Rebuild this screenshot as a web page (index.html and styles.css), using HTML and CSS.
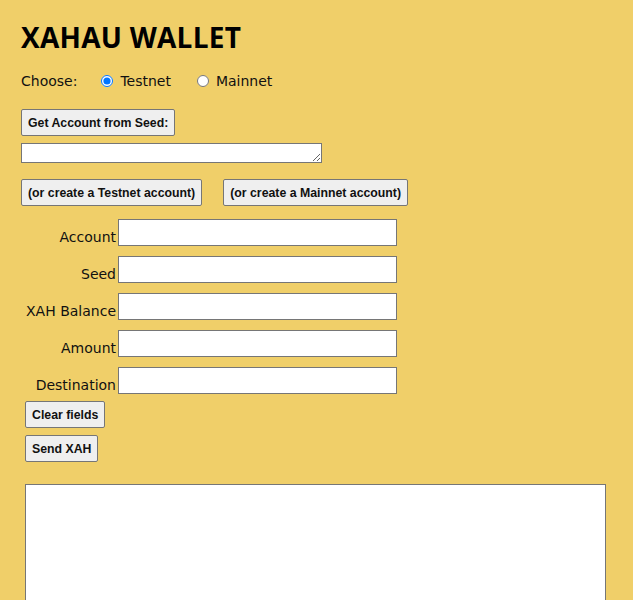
FILE: index.html
```html
<!DOCTYPE html>
<html>
<head>
<meta charset="utf-8">
<link rel="stylesheet" href="styles.css">
</head>
<body>
<div class="page">
  <h1 class="title">XAHAU WALLET</h1>
  <div class="choose">
    <span class="choose-label">Choose:</span>
    <label class="radio"><input type="radio" name="net" checked> Testnet</label>
    <label class="radio"><input type="radio" name="net"> Mainnet</label>
  </div>
  <div class="seed-block">
    <button class="btn">Get Account from Seed:</button>
    <textarea class="seed-area"></textarea>
  </div>
  <div class="create-row">
    <button class="btn">(or create a Testnet account)</button>
    <button class="btn">(or create a Mainnet account)</button>
  </div>
  <div class="fields">
    <label class="field-label">Account</label><input class="field" type="text">
    <label class="field-label">Seed</label><input class="field" type="text">
    <label class="field-label">XAH Balance</label><input class="field" type="text">
    <label class="field-label">Amount</label><input class="field" type="text">
    <label class="field-label">Destination</label><input class="field" type="text">
  </div>
  <div class="actions">
    <button class="btn">Clear fields</button>
    <button class="btn">Send XAH</button>
  </div>
  <textarea class="results"></textarea>
</div>
</body>
</html>
```

FILE: styles.css
```css
html, body {
  margin: 0;
  padding: 0;
  background: #f0cf69;
}
body {
  font-family: "DejaVu Sans", "Liberation Sans", sans-serif;
  color: #111;
}
.page {
  padding: 20px 0 0 21px;
  display: flex;
  flex-direction: column;
  align-items: flex-start;
}
.title {
  margin: 0;
  font-family: "Open Sans", "Liberation Sans", sans-serif;
  font-size: 28px;
  font-weight: 700;
  line-height: 34px;
  letter-spacing: 0.25px;
  color: #000;
}
.choose {
  margin-top: 16px;
  display: flex;
  align-items: center;
  font-size: 14px;
  height: 22px;
}
.choose-label {
  margin-right: 24px;
}
.radio {
  display: flex;
  align-items: center;
  margin-right: 26px;
}
.radio input {
  margin: 0 7px 0 0;
  width: 12px;
  height: 12px;
}
.btn {
  font-family: "Liberation Sans", Arial, sans-serif;
  font-weight: 700;
  font-size: 12.3px;
  color: #111;
  background: #efefef;
  border: 1px solid #767676;
  border-radius: 2px;
  padding: 0 6px;
  height: 27px;
}
.seed-block {
  margin-top: 17px;
  display: flex;
  flex-direction: column;
  align-items: flex-start;
  gap: 7px;
}
.seed-area {
  width: 301px;
  height: 20px;
  box-sizing: border-box;
  border: 1px solid #767676;
  margin: 0;
  padding: 0;
}
.create-row {
  margin-top: 16px;
  display: flex;
  gap: 21px;
}
.fields {
  margin-top: 13px;
  display: grid;
  grid-template-columns: 95px 279px;
  column-gap: 2px;
  row-gap: 10px;
  align-items: end;
}
.field-label {
  text-align: right;
  font-size: 14px;
  line-height: 17px;
  padding-bottom: 0;
}
.field {
  height: 27px;
  box-sizing: border-box;
  border: 1px solid #767676;
  margin: 0;
  background: #fff;
}
.actions {
  margin-top: 7px;
  margin-left: 4px;
  display: flex;
  flex-direction: column;
  align-items: flex-start;
  gap: 7px;
}
.results {
  margin: 22px 0 0 4px;
  width: 581px;
  height: 140px;
  box-sizing: border-box;
  border: 1px solid #767676;
  padding: 0;
  resize: none;
}
```
